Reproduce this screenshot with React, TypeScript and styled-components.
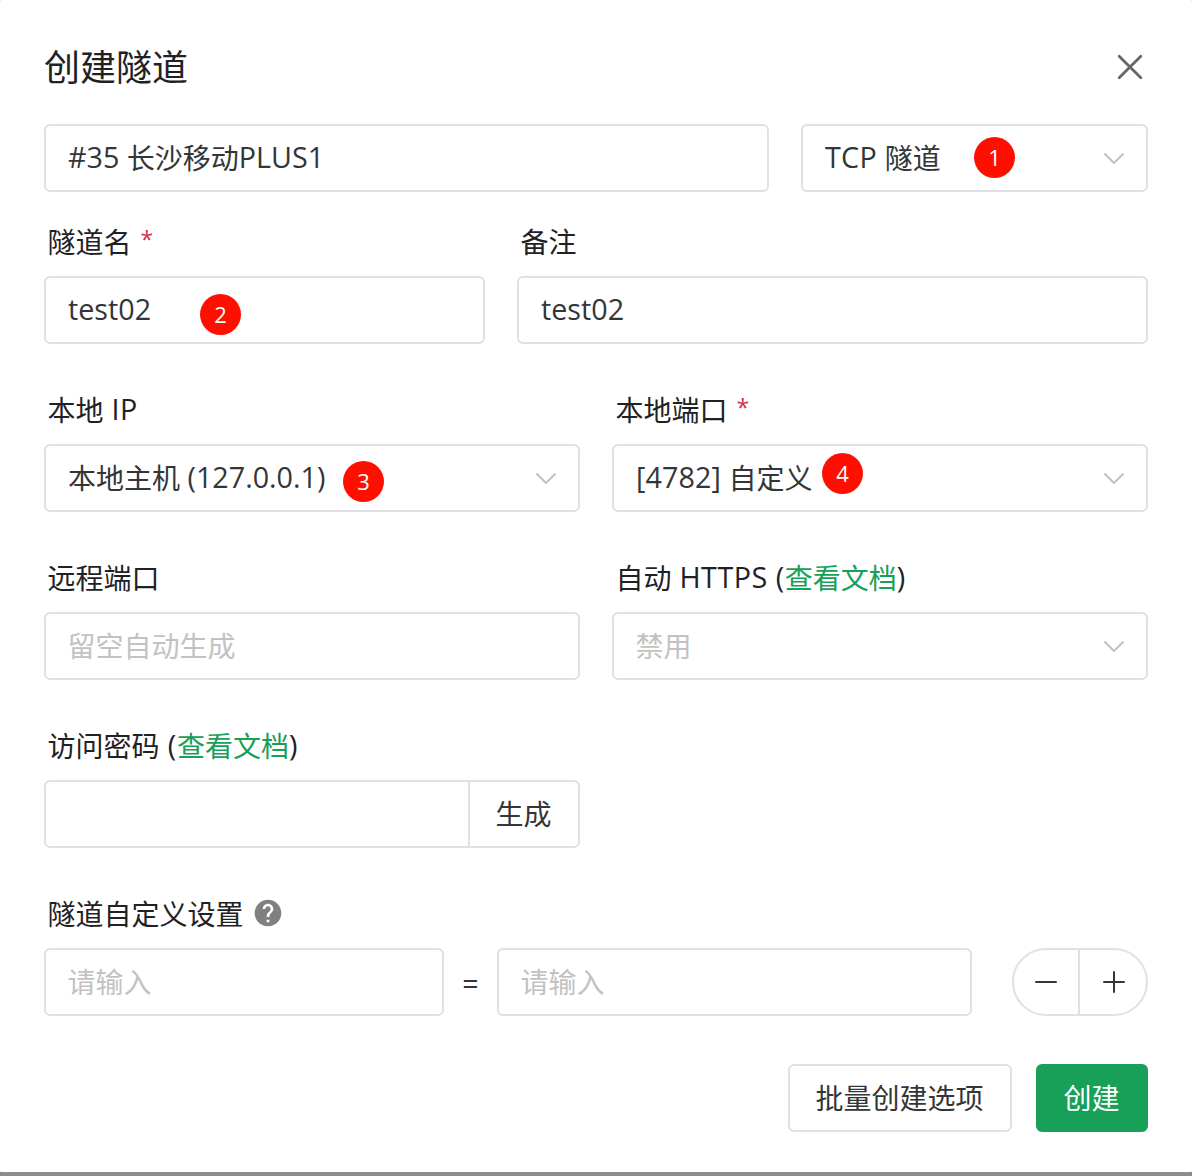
import React from 'react';
import styled, { createGlobalStyle } from 'styled-components';

const GlobalStyle = createGlobalStyle`
  * { box-sizing: border-box; }
  body {
    margin: 0;
    background: #8c8c8c;
    font-family: "Open Sans", "Noto Sans CJK SC", sans-serif;
    font-size: 28px;
    color: #333639;
  }
`;

const Modal = styled.main`
  width: 1192px;
  height: 1172px;
  padding: 44px 44px 40px;
  margin-bottom: 4px;
  background: #fff;
  border-radius: 1px;
`;

const Header = styled.header`
  display: flex;
  align-items: center;
  justify-content: space-between;
  height: 46px;
  margin-bottom: 34px;
`;

const Title = styled.h1`
  margin: 0;
  padding-top: 2px;
  font-size: 36px;
  line-height: 46px;
  font-weight: 400;
  color: #1f2225;
`;

const IconButton = styled.button`
  display: flex;
  padding: 0;
  margin: 0;
  border: 0;
  background: none;
`;

const Row = styled.div<{ $columns: string; $top?: number }>`
  display: grid;
  grid-template-columns: ${(p) => p.$columns};
  column-gap: 32px;
  margin-top: ${(p) => p.$top ?? 0}px;
`;

const Label = styled.label`
  display: flex;
  align-items: center;
  height: 52px;
  padding: 0 0 16px 3.5px;
  line-height: 36px;
  color: #1f2225;
  white-space: pre;
`;

const Latin = styled.span<{ $spacing?: number }>`
  font-size: 28.7px;
  line-height: 0;
  vertical-align: 1px;
  letter-spacing: ${(p) => p.$spacing ?? 0}px;
`;

const Required = styled.span`
  margin-left: 9px;
  font-size: 23px;
  line-height: 0;
  vertical-align: 5px;
  color: #d03050;
`;

const DocLink = styled.a`
  color: #18a058;
`;

const Control = styled.div<{ $muted?: boolean }>`
  position: relative;
  display: flex;
  align-items: center;
  justify-content: space-between;
  height: 68px;
  padding: 0 21px 0 ${(p) => (p.$muted ? 21.5 : 22)}px;
  border: 2px solid #e0e0e6;
  border-radius: 6px;
  line-height: 40px;
  white-space: pre;
  color: ${(p) => (p.$muted ? '#c2c2c2' : '#333639')};
`;

const Badge = styled.span<{ $x: number; $y: number }>`
  position: absolute;
  left: ${(p) => p.$x}px;
  top: ${(p) => p.$y}px;
  width: 41px;
  height: 41px;
  border-radius: 50%;
  background: #ff0f00;
  color: #fff;
  font-size: 22px;
  line-height: 41px;
  text-align: center;
`;

const InputGroup = styled.div`
  display: flex;
  height: 68px;
  border: 2px solid #e0e0e6;
  border-radius: 6px;
`;

const PlainInput = styled.input`
  flex: 1;
  min-width: 0;
  border: 0;
  background: transparent;
  outline: none;
`;

const GenerateButton = styled.button`
  width: 110px;
  padding: 0 1px 2px 0;
  border: 0;
  border-left: 2px solid #e0e0e6;
  background: none;
  font: inherit;
  color: inherit;
`;

const PairRow = styled.div`
  display: grid;
  grid-template-columns: 400px 53px 475px 136px;
  align-items: center;
`;

const Equals = styled.span`
  text-align: center;
  font-size: 28.7px;
`;

const Stepper = styled.div`
  display: flex;
  width: 136px;
  height: 68px;
  margin-left: 40px;
  border: 2px solid #e0e0e6;
  border-radius: 34px;
`;

const StepButton = styled.button<{ $divided?: boolean }>`
  display: flex;
  flex: ${(p) => (p.$divided ? '0 0 66px' : '1')};
  align-items: center;
  justify-content: center;
  padding: ${(p) => (p.$divided ? '0' : '0 0 0 2px')};
  border: 0;
  border-right: ${(p) => (p.$divided ? '2px solid #e0e0e6' : '0')};
  background: none;
`;

const Footer = styled.footer`
  display: flex;
  justify-content: flex-end;
  gap: 24px;
  margin-top: 48px;
`;

const Button = styled.button<{ $primary?: boolean }>`
  height: 68px;
  width: ${(p) => (p.$primary ? 112 : 224)}px;
  padding: 0 1px 0 0;
  border: 2px solid ${(p) => (p.$primary ? '#18a058' : '#e0e0e6')};
  border-radius: 6px;
  background: ${(p) => (p.$primary ? '#18a058' : '#fff')};
  color: ${(p) => (p.$primary ? '#fff' : '#333639')};
  font: inherit;
  line-height: 40px;
`;

const HelpSvg = styled.svg`
  margin: 0 0 2px 8.5px;
`;

const Chevron = () => (
  <svg width="22" height="14" viewBox="0 0 22 14" fill="none" stroke="#c2c2c2" strokeWidth="2" strokeLinecap="round" strokeLinejoin="round">
    <path d="M2 3 11 12 20 3" />
  </svg>
);

const HelpIcon = () => (
  <HelpSvg width="32" height="32" viewBox="0 0 24 24" fill="#808080">
    <path d="M12 2C6.48 2 2 6.48 2 12s4.48 10 10 10 10-4.48 10-10S17.52 2 12 2zm1 17h-2v-2h2v2zm2.07-7.75l-.9.92C13.45 12.9 13 13.5 13 15h-2v-.5c0-1.1.45-2.1 1.17-2.83l1.24-1.26c.37-.36.59-.86.59-1.41 0-1.1-.9-2-2-2s-2 .9-2 2H8c0-2.21 1.79-4 4-4s4 1.79 4 4c0 .88-.36 1.68-.93 2.25z" />
  </HelpSvg>
);

export default function App() {
  return (
    <>
      <GlobalStyle />
      <Modal>
        <Header>
          <Title>创建隧道</Title>
          <IconButton aria-label="close">
            <svg width="36" height="36" viewBox="0 0 36 36" fill="none" stroke="#666" strokeWidth="2.8" strokeLinecap="round">
              <path d="M7.2 7.2 28.8 28.8M28.8 7.2 7.2 28.8" />
            </svg>
          </IconButton>
        </Header>

        <Row $columns="725px 347px">
          <Control>
            <span><Latin>#35 </Latin>长沙移动<Latin>PLUS1</Latin></span>
          </Control>
          <Control>
            <span><Latin $spacing={0.3}>TCP </Latin>隧道</span>
            <Badge $x={171} $y={11}>1</Badge>
            <Chevron />
          </Control>
        </Row>

        <Row $columns="441px 631px" $top={32}>
          <div>
            <Label><span>隧道名<Required>*</Required></span></Label>
            <Control>
              <span><Latin>test02</Latin></span>
              <Badge $x={154} $y={16}>2</Badge>
            </Control>
          </div>
          <div>
            <Label>备注</Label>
            <Control><span><Latin>test02</Latin></span></Control>
          </div>
        </Row>

        <Row $columns="1fr 1fr" $top={48}>
          <div>
            <Label><span>本地<Latin $spacing={0.5}> IP</Latin></span></Label>
            <Control>
              <span>本地主机<Latin> (127.0.0.1)</Latin></span>
              <Badge $x={297} $y={15}>3</Badge>
              <Chevron />
            </Control>
          </div>
          <div>
            <Label><span>本地端口<Required>*</Required></span></Label>
            <Control>
              <span><Latin $spacing={0.1}>[4782] </Latin>自定义</span>
              <Badge $x={208} $y={7}>4</Badge>
              <Chevron />
            </Control>
          </div>
        </Row>

        <Row $columns="1fr 1fr" $top={48}>
          <div>
            <Label>远程端口</Label>
            <Control $muted>留空自动生成</Control>
          </div>
          <div>
            <Label>
              <span>自动<Latin $spacing={0.5}> HTTPS (</Latin><DocLink>查看文档</DocLink><Latin>)</Latin></span>
            </Label>
            <Control $muted>
              禁用
              <Chevron />
            </Control>
          </div>
        </Row>

        <Row $columns="1fr 1fr" $top={48}>
          <div>
            <Label>
              <span>访问密码<Latin $spacing={0.8}> (</Latin><DocLink>查看文档</DocLink><Latin>)</Latin></span>
            </Label>
            <InputGroup>
              <PlainInput />
              <GenerateButton>生成</GenerateButton>
            </InputGroup>
          </div>
        </Row>

        <Row $columns="1fr" $top={48}>
          <div>
            <Label>隧道自定义设置<HelpIcon /></Label>
            <PairRow>
              <Control $muted>请输入</Control>
              <Equals>=</Equals>
              <Control $muted>请输入</Control>
              <Stepper>
                <StepButton $divided aria-label="remove">
                  <svg width="24" height="24" viewBox="0 0 24 24" stroke="#333639" strokeWidth="2" strokeLinecap="round">
                    <path d="M2 12H22" />
                  </svg>
                </StepButton>
                <StepButton aria-label="add">
                  <svg width="24" height="24" viewBox="0 0 24 24" stroke="#333639" strokeWidth="2" strokeLinecap="round">
                    <path d="M2 12H22M12 2V22" />
                  </svg>
                </StepButton>
              </Stepper>
            </PairRow>
          </div>
        </Row>

        <Footer>
          <Button>批量创建选项</Button>
          <Button $primary>创建</Button>
        </Footer>
      </Modal>
    </>
  );
}
